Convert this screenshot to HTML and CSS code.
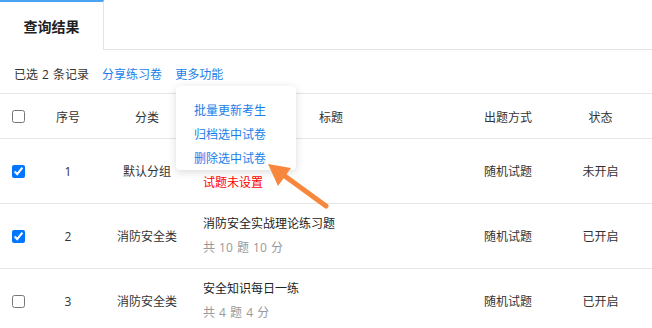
FILE: index.html
```html
<!DOCTYPE html>
<html lang="zh-CN">
<head>
<meta charset="utf-8">
<title>查询结果</title>
<link rel="stylesheet" href="styles.css">
</head>
<body>
<div class="page">
  <div class="tabs">
    <div class="tab active">查询结果</div>
    <div class="tab-rest"></div>
  </div>
  <div class="toolbar">
    <span class="count">已选 2 条记录</span>
    <a class="link">分享练习卷</a>
    <a class="link">更多功能</a>
  </div>
  <div class="table">
    <div class="row head">
      <div class="cell check"><input type="checkbox"></div>
      <div class="cell c">序号</div>
      <div class="cell c">分类</div>
      <div class="cell c">标题</div>
      <div class="cell c">出题方式</div>
      <div class="cell c">状态</div>
    </div>
    <div class="row">
      <div class="cell check"><input type="checkbox" checked></div>
      <div class="cell c">1</div>
      <div class="cell c">默认分组</div>
      <div class="cell title"><div class="t empty"></div><div class="sub warn">试题未设置</div></div>
      <div class="cell c">随机试题</div>
      <div class="cell c">未开启</div>
    </div>
    <div class="row">
      <div class="cell check"><input type="checkbox" checked></div>
      <div class="cell c">2</div>
      <div class="cell c">消防安全类</div>
      <div class="cell title"><div class="t">消防安全实战理论练习题</div><div class="sub">共 10 题 10 分</div></div>
      <div class="cell c">随机试题</div>
      <div class="cell c">已开启</div>
    </div>
    <div class="row">
      <div class="cell check"><input type="checkbox"></div>
      <div class="cell c">3</div>
      <div class="cell c">消防安全类</div>
      <div class="cell title"><div class="t">安全知识每日一练</div><div class="sub">共 4 题 4 分</div></div>
      <div class="cell c">随机试题</div>
      <div class="cell c">已开启</div>
    </div>
  </div>
  <div class="menu">
    <div class="item">批量更新考生</div>
    <div class="item">归档选中试卷</div>
    <div class="item">删除选中试卷</div>
  </div>
  <svg class="arrow" width="652" height="328" viewBox="0 0 652 328">
    <line x1="282" y1="174" x2="326" y2="206" stroke="#f7873c" stroke-width="5" stroke-linecap="round"/>
    <polygon points="268,164 291,168 278,186" fill="#f7873c"/>
  </svg>
</div>
</body>
</html>
```
FILE: styles.css
```css
html, body {
  margin: 0;
  padding: 0;
  background: #fff;
}
body {
  font-family: "Open Sans", "Noto Sans CJK SC", sans-serif;
  font-size: 12px;
  color: #333;
  overflow: hidden;
}
.page {
  position: relative;
  width: 652px;
  height: 328px;
  overflow: hidden;
}
.tabs {
  display: flex;
  height: 50px;
}
.tab {
  width: 104px;
  box-sizing: border-box;
  border-top: 2px solid #4aa3f5;
  border-right: 1px solid #e4e4e4;
  font-size: 14px;
  font-weight: bold;
  color: #222;
  text-align: center;
  line-height: 50px;
}
.tab-rest {
  flex: 1;
  border-bottom: 1px solid #e4e4e4;
}
.toolbar {
  display: flex;
  gap: 13px;
  height: 44px;
  box-sizing: border-box;
  padding: 4px 0 0 14px;
  align-items: center;
  border-bottom: 1px solid #e6e6e6;
}
.count {
  word-spacing: 1px;
}
.link {
  color: #1a7ee8;
  cursor: pointer;
}
.row {
  display: grid;
  grid-template-columns: 37px 62px 96px 272px 82px 103px;
  height: 65px;
  box-sizing: border-box;
  border-bottom: 1px solid #e6e6e6;
}
.row.head {
  height: 45px;
  padding-top: 1px;
}
.cell {
  display: flex;
  align-items: center;
}
.cell.c {
  justify-content: center;
}
.cell.check {
  padding-left: 12px;
}
.cell.check input {
  margin: 0;
  width: 13px;
  height: 13px;
}
.cell.title {
  flex-direction: column;
  align-items: flex-start;
  justify-content: center;
  padding-left: 8px;
}
.t {
  line-height: 24px;
  color: #222;
}
.t.empty {
  height: 24px;
}
.sub {
  line-height: 24px;
  color: #999;
  word-spacing: 1px;
}
.sub.warn {
  color: #f00;
}
.menu {
  position: absolute;
  left: 176px;
  top: 86px;
  width: 120px;
  height: 84px;
  box-sizing: border-box;
  padding: 13px 0 0 18px;
  background: #fff;
  border-radius: 4px;
  box-shadow: 0 2px 8px rgba(0, 0, 0, 0.15);
}
.item {
  line-height: 24px;
  color: #1a7ee8;
}
.arrow {
  position: absolute;
  left: 0;
  top: 0;
  pointer-events: none;
}
```
